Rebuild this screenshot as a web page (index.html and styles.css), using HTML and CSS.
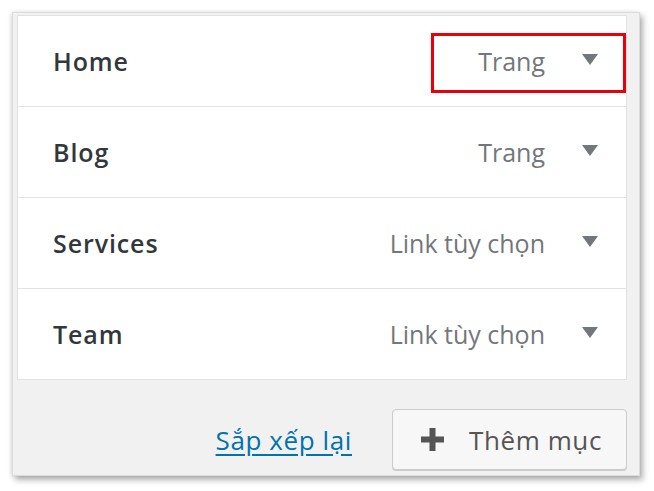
FILE: index.html
```html
<!DOCTYPE html>
<html lang="vi">
<head>
<meta charset="utf-8">
<title>Menu</title>
<link rel="stylesheet" href="styles.css">
</head>
<body>
<div class="panel">
  <ul class="menu-list">
    <li class="menu-item">
      <span class="item-title">Home</span>
      <span class="item-type">Trang</span>
      <span class="arrow"></span>
      <span class="highlight"></span>
    </li>
    <li class="menu-item">
      <span class="item-title">Blog</span>
      <span class="item-type">Trang</span>
      <span class="arrow"></span>
    </li>
    <li class="menu-item">
      <span class="item-title">Services</span>
      <span class="item-type">Link tùy chọn</span>
      <span class="arrow"></span>
    </li>
    <li class="menu-item">
      <span class="item-title">Team</span>
      <span class="item-type">Link tùy chọn</span>
      <span class="arrow"></span>
    </li>
  </ul>
  <div class="footer">
    <a class="reorder" href="#">Sắp xếp lại</a>
    <button class="add-btn" type="button">
      <svg class="plus" width="23" height="23" viewBox="0 0 23 23" aria-hidden="true"><path d="M8.5 0h6v8.5H23v6h-8.5V23h-6v-8.5H0v-6h8.5z" fill="#555"/></svg>
      <span>Thêm mục</span>
    </button>
  </div>
</div>
</body>
</html>
```
FILE: styles.css
```css
* { box-sizing: border-box; }
html, body { margin: 0; padding: 0; background: #fff; }
body {
  font-family: "Open Sans", "Noto Sans", sans-serif;
  width: 654px;
  height: 491px;
  overflow: hidden;
}
.panel {
  margin: 12px 0 0 12px;
  width: 628px;
  height: 464px;
  background: #f1f1f1;
  border: 1px solid #dcdcdc;
  box-shadow: 3px 4px 6px rgba(0,0,0,0.3), -1px 0 4px rgba(0,0,0,0.12);
  padding: 2px 12px 0 4px;
  display: flex;
  flex-direction: column;
}
.menu-list {
  list-style: none;
  margin: 0;
  padding: 0;
  background: #fff;
  border: 1px solid #e2e2e2;
}
.menu-item {
  position: relative;
  height: 91px;
  display: flex;
  align-items: center;
  padding: 0 28px 0 35px;
  border-top: 1px solid #e2e2e2;
}
.menu-item:first-child { border-top: 0; height: 90px; }
.item-title {
  flex: 1;
  font-size: 25px;
  font-weight: 600;
  letter-spacing: 0.9px;
  color: #32373c;
}
.item-type {
  font-size: 25px;
  color: #72777c;
  margin-right: 37px;
}
.arrow {
  width: 0;
  height: 0;
  border-left: 8px solid transparent;
  border-right: 8px solid transparent;
  border-top: 11px solid #72777c;
  margin-top: -3px;
}
.highlight {
  position: absolute;
  left: 413px;
  top: 17px;
  width: 195px;
  height: 60px;
  border: 3px solid #e8000b;
}
.footer {
  display: flex;
  justify-content: flex-end;
  align-items: center;
  gap: 40px;
  margin-top: 29px;
}
.reorder {
  font-size: 26px;
  letter-spacing: 0.6px;
  color: #0073aa;
  text-decoration: underline;
  text-underline-offset: 4px;
}
.add-btn {
  display: flex;
  align-items: center;
  gap: 25px;
  width: 235px;
  height: 61px;
  padding: 0 0 0 28px;
  background: #f7f7f7;
  border: 1px solid #cccccc;
  border-radius: 4px;
  box-shadow: 0 1px 0 #cccccc;
  font-family: "Open Sans", "Noto Sans", sans-serif;
  font-size: 26px;
  letter-spacing: 0.6px;
  color: #555;
}
.plus { flex: none; }
```
